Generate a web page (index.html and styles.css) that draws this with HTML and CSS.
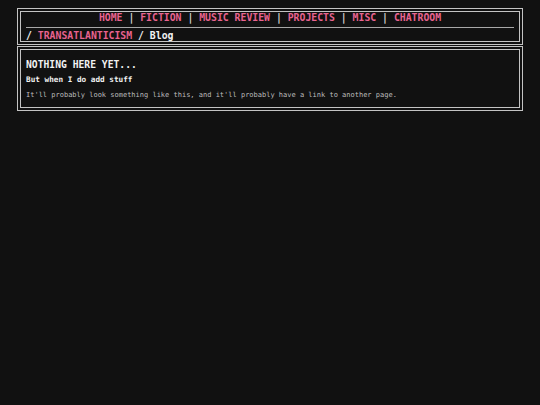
FILE: index.html
```
<!DOCTYPE html>
<html>
<head>
<meta charset="utf-8">
<link rel="stylesheet" href="styles.css">
</head>
<body>
<div class="page">
  <header class="box header">
    <nav class="nav">
      <a href="#">HOME</a> | <a href="#">FICTION</a> | <a href="#">MUSIC REVIEW</a> | <a href="#">PROJECTS</a> | <a href="#">MISC</a> | <a href="#">CHATROOM</a>
    </nav>
    <hr class="rule">
    <div class="crumb">/ <a href="#">TRANSATLANTICISM</a> / Blog</div>
  </header>
  <main class="box content">
    <h1 class="title">NOTHING HERE YET...</h1>
    <h3 class="sub">But when I do add stuff</h3>
    <p class="text">It'll probably look something like this, and it'll probably have a link to another page.</p>
  </main>
</div>
</body>
</html>
```
FILE: styles.css
```
html, body {
  margin: 0;
  padding: 0;
  background: #111111;
}
body {
  font-family: "DejaVu Sans Mono", "Liberation Mono", monospace;
  color: #f2f2f2;
}
.page {
  width: 506px;
  margin: 8px auto 0;
  display: flex;
  flex-direction: column;
  gap: 1px;
}
.box {
  border: 4px double #c4c4c4;
  box-sizing: border-box;
}
.header {
  padding: 1px 4px 0;
}
.nav {
  text-align: center;
  font-size: 9.8px;
  font-weight: bold;
  color: #cfcfcf;
  line-height: 10px;
  margin-top: 0;
}
a {
  color: #e8638f;
  text-decoration: none;
}
.rule {
  border: 0;
  border-top: 1px solid #a8a8a8;
  margin: 4px 1px 0;
}
.crumb {
  font-size: 9.8px;
  font-weight: bold;
  line-height: 10px;
  margin-top: 3px;
  padding-left: 1px;
}
.content {
  padding: 9px 4px 7px;
}
.title {
  font-size: 9.7px;
  font-weight: bold;
  margin: 0 0 0 1px;
  line-height: 12px;
}
.sub {
  font-size: 7.7px;
  font-weight: bold;
  margin: 4px 0 0 1px;
  line-height: 10px;
}
.text {
  font-size: 7px;
  color: #bdbdbd;
  margin: 5px 0 0 1px;
  line-height: 10px;
}
```
